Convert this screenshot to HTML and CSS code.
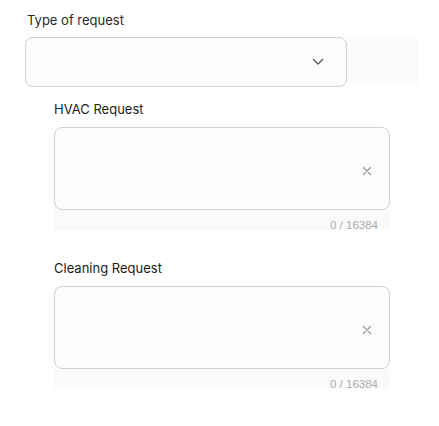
FILE: index.html
```html
<!DOCTYPE html>
<html lang="en">
<head>
<meta charset="utf-8">
<title>Request form</title>
<link rel="stylesheet" href="styles.css">
</head>
<body>
<div class="page">
  <div class="field">
    <div class="label">Type of request</div>
    <div class="select-row">
      <div class="select">
        <svg class="chevron" width="12" height="8" viewBox="0 0 12 8"><path d="M1.5 1.5 L6 6 L10.5 1.5" fill="none" stroke="#555" stroke-width="1.3" stroke-linecap="round" stroke-linejoin="round"/></svg>
      </div>
      <div class="select-filler"></div>
    </div>
  </div>

  <div class="sub">
    <div class="label label-dark">HVAC Request</div>
    <div class="textarea">
      <svg class="clear" width="10" height="10" viewBox="0 0 10 10"><path d="M1.5 1.5 L8.5 8.5 M8.5 1.5 L1.5 8.5" stroke="#9a9a9a" stroke-width="1.3" stroke-linecap="round"/></svg>
    </div>
    <div class="counter">0 / 16384</div>
  </div>

  <div class="sub sub-second">
    <div class="label label-dark">Cleaning Request</div>
    <div class="textarea">
      <svg class="clear" width="10" height="10" viewBox="0 0 10 10"><path d="M1.5 1.5 L8.5 8.5 M8.5 1.5 L1.5 8.5" stroke="#9a9a9a" stroke-width="1.3" stroke-linecap="round"/></svg>
    </div>
    <div class="counter">0 / 16384</div>
  </div>
</div>
</body>
</html>
```

FILE: styles.css
```css
html, body {
  margin: 0;
  padding: 0;
  background: #ffffff;
}

.page {
  padding: 12px 0 0 25px;
  font-family: Inter, "Noto Sans", sans-serif;
}

.label {
  font-size: 13px;
  line-height: 16px;
  color: #2a2a2a;
  padding-left: 2px;
  margin-bottom: 9px;
}

.label-dark {
  color: #1c1c1c;
  padding-left: 0;
  margin-bottom: 10px;
}

.select-row {
  display: flex;
  align-items: flex-start;
}

.select {
  box-sizing: border-box;
  width: 322px;
  height: 50px;
  border: 1px solid #cfcfcf;
  border-radius: 8px;
  background: #fcfcfc;
  display: flex;
  align-items: center;
  justify-content: flex-end;
  padding-right: 22px;
}

.select-filler {
  width: 71px;
  height: 48px;
  background: #fafafa;
}

.sub {
  margin-left: 29px;
  width: 336px;
  margin-top: 14px;
}

.sub-second {
  margin-top: 30px;
}

.textarea {
  box-sizing: border-box;
  height: 83px;
  border: 1px solid #cfcfcf;
  border-radius: 8px;
  background: #fcfcfc;
  display: flex;
  align-items: center;
  justify-content: flex-end;
  padding: 4px 17px 0 0;
}

.counter {
  box-sizing: border-box;
  height: 20px;
  padding: 8px 12px 0 0;
  background: #fafafa;
  font-family: "Liberation Sans", Arial, sans-serif;
  font-size: 11.5px;
  line-height: 14px;
  color: #ababab;
  text-align: right;
  overflow: hidden;
}
```
